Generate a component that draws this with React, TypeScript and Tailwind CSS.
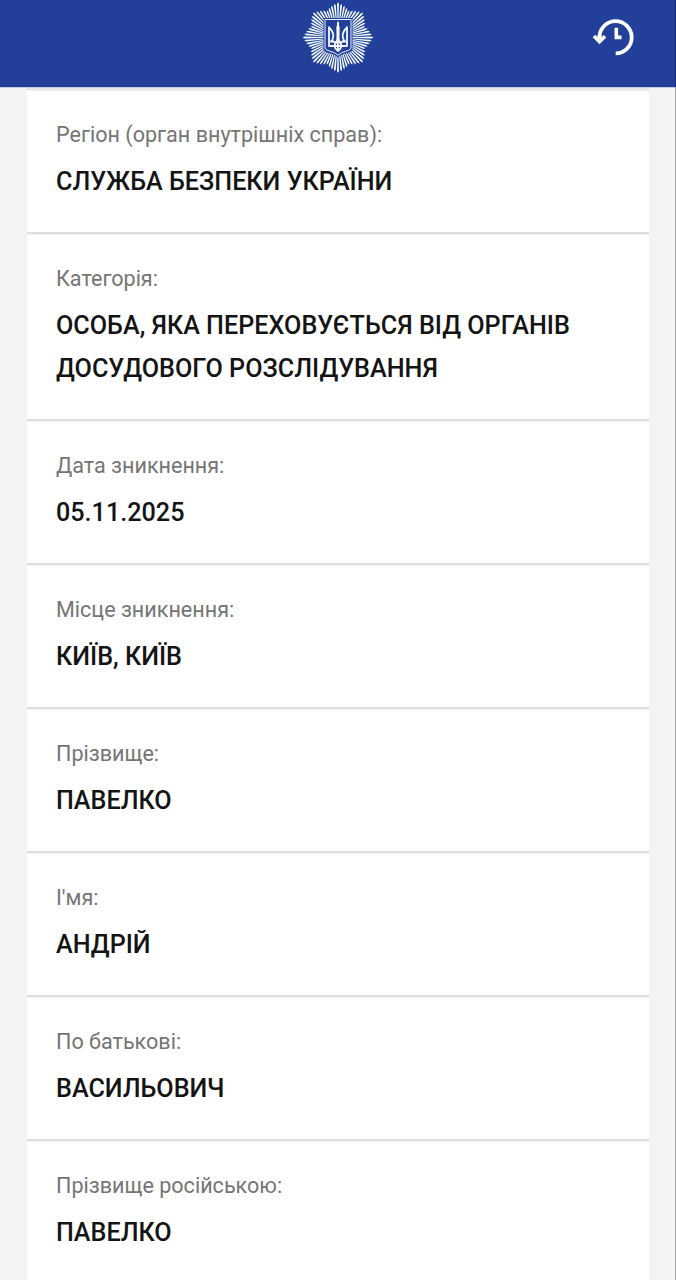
const fields = [
  { label: 'Регіон (орган внутрішніх справ):', value: 'СЛУЖБА БЕЗПЕКИ УКРАЇНИ' },
  { label: 'Категорія:', value: 'ОСОБА, ЯКА ПЕРЕХОВУЄТЬСЯ ВІД ОРГАНІВ ДОСУДОВОГО РОЗСЛІДУВАННЯ' },
  { label: 'Дата зникнення:', value: '05.11.2025' },
  { label: 'Місце зникнення:', value: 'КИЇВ, КИЇВ' },
  { label: 'Прізвище:', value: 'ПАВЕЛКО' },
  { label: "І'мя:", value: 'АНДРІЙ' },
  { label: 'По батькові:', value: 'ВАСИЛЬОВИЧ' },
  { label: 'Прізвище російською:', value: 'ПАВЕЛКО' },
];

// 64 rays, the tips follow an eight-pointed star
const rays = Array.from({ length: 64 }, (_, i) => {
  const dist = Math.abs(((i + 4) % 8) - 4) / 4;
  const len = 35.5 - 6 * dist;
  const a = (i * Math.PI) / 32;
  const w = 0.029;
  const p = (r: number, t: number) => `${(r * Math.sin(t)).toFixed(2)} ${(-r * Math.cos(t)).toFixed(2)}`;
  return `M${p(10, a - w)}L${p(len - 2, a - w)}L${p(len, a)}L${p(len - 2, a + w)}L${p(10, a + w)}Z`;
}).join('');

function Emblem() {
  return (
    <svg width="72" height="72" viewBox="-36 -36.5 72 72">
      <path d={rays} fill="#f1f8fd" />
      <path d="M-14.5 -19.5H14.5V11.5Q14 14.5 9 15.5Q3 16.5 0 20Q-3 16.5 -9 15.5Q-14 14.5 -14.5 11.5Z" fill="#224099" />
      <path d="M-13 -18H13V10.5Q12.6 12.8 8 13.7Q3 14.7 0 17.7Q-3 14.7 -8 13.7Q-12.6 12.8 -13 10.5Z" fill="#224099" stroke="#e6f1fb" strokeWidth="1" />
      <g fill="none" stroke="#f4faff" strokeWidth="1.8" strokeLinejoin="round">
        <path d="M-9 -11V8.5H9V-11" />
        <path d="M-9 -10Q-4.7 -6 -4.7 -2Q-4.8 1 -6 3Q-4.5 5 -2 4.5Q-.3 3 -.5 -3L0 -15L.5 -3Q.3 3 2 4.5Q4.5 5 6 3Q4.8 1 4.7 -2Q4.7 -6 9 -10" />
        <path d="M-8 4H-4M8 4H4M-3.5 8.5Q-3 4.5 0 4.5Q3 4.5 3.5 8.5Q3 11.5 0 13.5Q-3 11.5 -3.5 8.5M0 5V13" />
      </g>
      <path d="M0 -16L1.6 -10L.9 3H-.9L-1.6 -10Z" fill="#f4faff" />
    </svg>
  );
}

function HistoryIcon() {
  return (
    <svg width="44" height="40" viewBox="0 0 44 40" fill="none" stroke="#fff">
      <path d="M7.5 20.5A16.1 16.1 0 1 1 23.7 36.4" strokeWidth="3.8" />
      <path d="M2 19L7.5 24.6L13 19.2" strokeWidth="3.6" />
      <path d="M7.5 18V24" strokeWidth="4" />
      <path d="M24.3 10.7V20.4H29.5" strokeWidth="3.6" />
    </svg>
  );
}

export default function App() {
  return (
    <div className="relative h-[1280px] w-[676px] overflow-hidden bg-[#f3f3f3] font-['Roboto',sans-serif]">
      <header className="grid h-[87px] grid-cols-[1fr_72px_1fr] items-start bg-[#224099] pt-[1px]">
        <div />
        <Emblem />
        <div className="flex justify-end pt-4 pr-[40px]">
          <HistoryIcon />
        </div>
      </header>
      <div className="h-px bg-[#bfc9e1]" />
      <main className="mx-[27px] border-t-2 border-[#e6e7e8] bg-white">
        {fields.map((f) => (
          <section key={f.label} className="border-t border-b-2 border-t-[#f1f1f1] border-b-[#dfdfdf] px-[29px] pt-[22px] pb-[29px]">
            <p className="h-[47px] text-[21.57px] leading-[43px] text-[#757575]">{f.label}</p>
            <p className="text-[25.18px] leading-[43px] font-medium text-[#141414]">{f.value}</p>
          </section>
        ))}
      </main>
      <div className="absolute top-0 right-0 h-full w-px bg-black/30" />
    </div>
  );
}
